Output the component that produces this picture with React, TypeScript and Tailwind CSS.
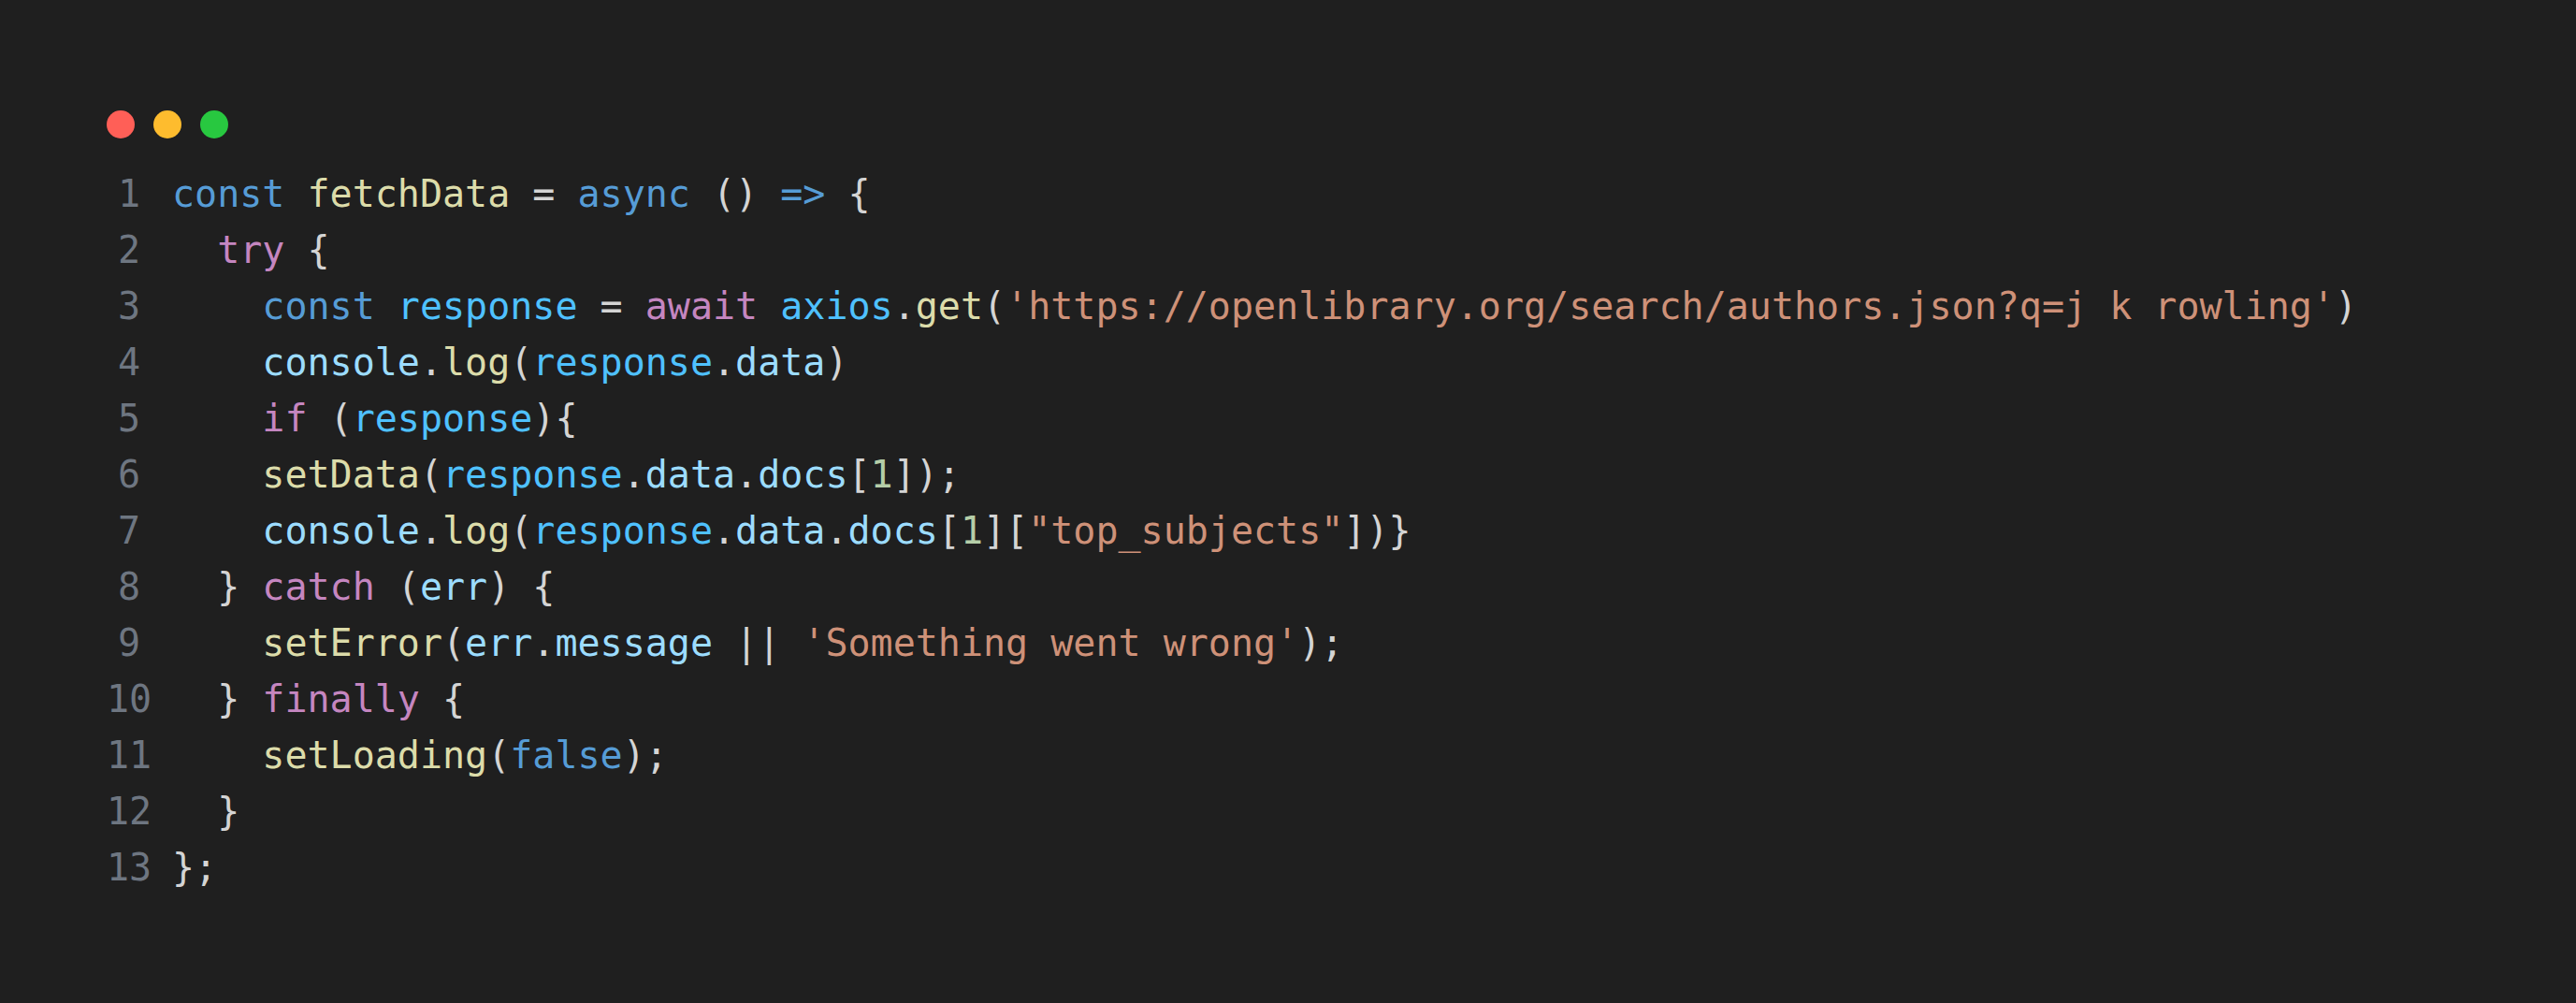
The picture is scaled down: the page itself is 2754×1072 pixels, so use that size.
type Tok = [string, string];

const KW = "text-[#569cd6]";
const CTL = "text-[#c586c0]";
const FN = "text-[#dcdcaa]";
const VAR = "text-[#4fc1ff]";
const PROP = "text-[#9cdcfe]";
const STR = "text-[#ce9178]";
const NUM = "text-[#b5cea8]";
const P = "text-[#d4d4d4]";

const LINES: Tok[][] = [
  [[KW, "const"], [P, " "], [FN, "fetchData"], [P, " = "], [KW, "async"], [P, " () "], [KW, "=>"], [P, " {"]],
  [[P, "  "], [CTL, "try"], [P, " {"]],
  [
    [P, "    "], [KW, "const"], [P, " "], [VAR, "response"], [P, " = "], [CTL, "await"], [P, " "], [VAR, "axios"], [P, "."],
    [FN, "get"], [P, "("], [STR, "'https://openlibrary.org/search/authors.json?q=j k rowling'"], [P, ")"],
  ],
  [[P, "    "], [PROP, "console"], [P, "."], [FN, "log"], [P, "("], [VAR, "response"], [P, "."], [PROP, "data"], [P, ")"]],
  [[P, "    "], [CTL, "if"], [P, " ("], [VAR, "response"], [P, "){"]],
  [
    [P, "    "], [FN, "setData"], [P, "("], [VAR, "response"], [P, "."], [PROP, "data"], [P, "."], [PROP, "docs"],
    [P, "["], [NUM, "1"], [P, "]);"],
  ],
  [
    [P, "    "], [PROP, "console"], [P, "."], [FN, "log"], [P, "("], [VAR, "response"], [P, "."], [PROP, "data"], [P, "."],
    [PROP, "docs"], [P, "["], [NUM, "1"], [P, "]["], [STR, "\"top_subjects\""], [P, "])}"],
  ],
  [[P, "  } "], [CTL, "catch"], [P, " ("], [PROP, "err"], [P, ") {"]],
  [
    [P, "    "], [FN, "setError"], [P, "("], [PROP, "err"], [P, "."], [PROP, "message"], [P, " || "],
    [STR, "'Something went wrong'"], [P, ");"],
  ],
  [[P, "  } "], [CTL, "finally"], [P, " {"]],
  [[P, "    "], [FN, "setLoading"], [P, "("], [KW, "false"], [P, ");"]],
  [[P, "  }"]],
  [[P, "};"]],
];

export default function App() {
  return (
    <div className="w-full h-[1072px] bg-[#1f1f1f] pt-[118px] pl-[114px] font-['DejaVu_Sans_Mono',monospace]">
      <div className="flex gap-[20px]">
        <span className="w-[30px] h-[30px] rounded-full bg-[#ff5f57]" />
        <span className="w-[30px] h-[30px] rounded-full bg-[#febc2e]" />
        <span className="w-[30px] h-[30px] rounded-full bg-[#28c840]" />
      </div>
      <div className="mt-[29px] text-[40px] leading-[60px]">
        {LINES.map((line, i) => (
          <div key={i} className="flex">
            <span className="w-[48px] text-center text-[#6e7681]">{i + 1}</span>
            <span className="ml-[22px] whitespace-pre">
              {line.map(([c, t], j) => (
                <span key={j} className={c}>
                  {t}
                </span>
              ))}
            </span>
          </div>
        ))}
      </div>
    </div>
  );
}
